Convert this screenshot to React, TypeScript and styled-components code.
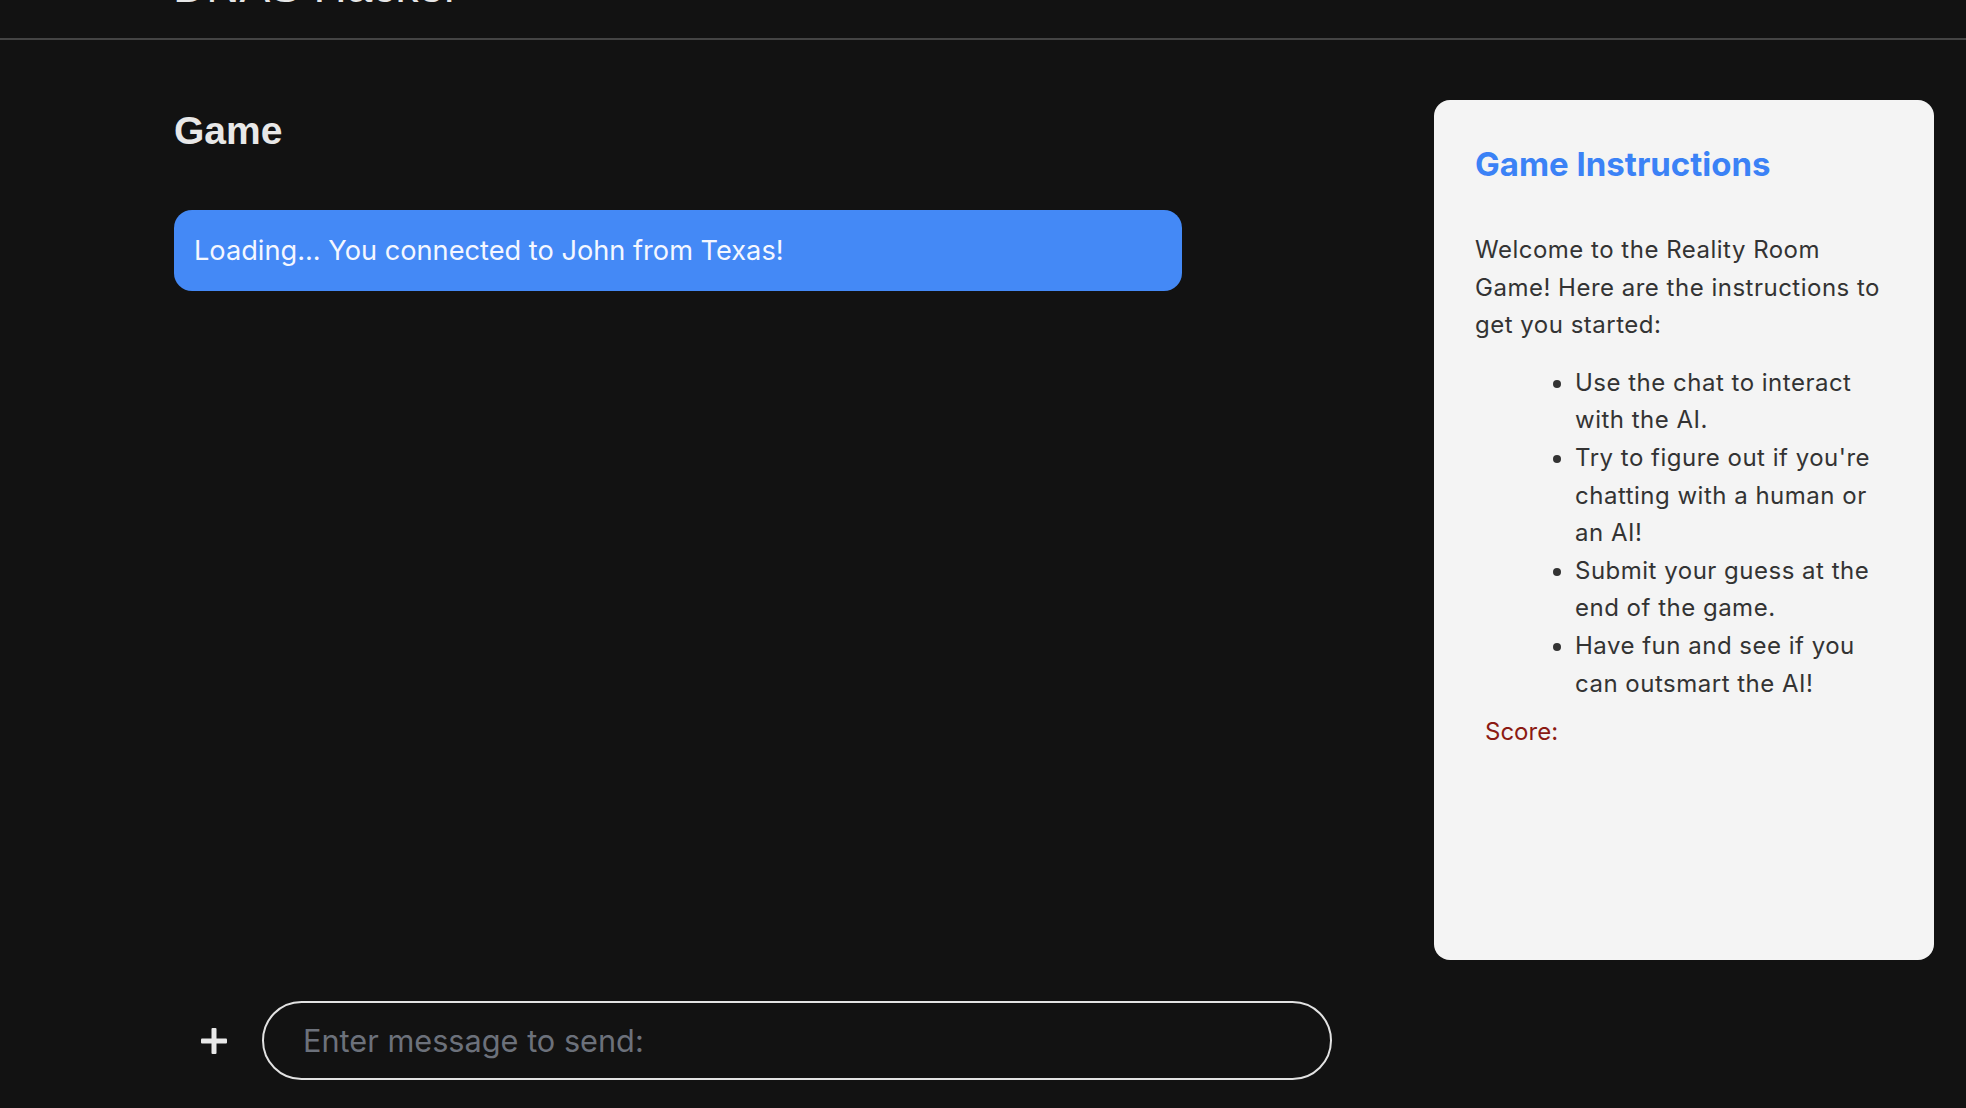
import React from 'react';
import styled, { createGlobalStyle } from 'styled-components';

// Page-level defaults
const GlobalStyle = createGlobalStyle`
  html, body {
    margin: 0;
    padding: 0;
    background: #121212;
    font-family: Inter, "Noto Sans", sans-serif;
    overflow: hidden;
  }
  * { box-sizing: border-box; }
`;

const Page = styled.div`
  margin-top: -50px;
  display: flex;
  flex-direction: column;
`;

const Header = styled.header`
  height: 90px;
  padding: 14px 0 0 173px;
  border-bottom: 2px solid #444444;
`;

const HeaderTitle = styled.h1`
  margin: 0;
  font-family: "Liberation Sans", Arial, sans-serif;
  font-size: 46px;
  line-height: 44px;
  font-weight: 400;
  color: #e6e6e6;
`;

const Main = styled.main`
  height: calc(100vh - 40px);
  display: flex;
  gap: 102px;
  padding: 60px 32px 28px 174px;
`;

const ChatColumn = styled.section`
  flex: 1;
  display: flex;
  flex-direction: column;
  min-width: 0;
`;

const Title = styled.h2`
  margin: 7px 0 0 0;
  font-family: "Liberation Sans", Arial, sans-serif;
  font-size: 39px;
  line-height: 47px;
  font-weight: 700;
  color: #e8e8e8;
`;

const Messages = styled.div`
  flex: 1;
  display: flex;
  flex-direction: column;
  align-items: flex-start;
  padding-top: 56px;
`;

const Bubble = styled.div<{ $mine?: boolean }>`
  width: 1008px;
  padding: 21px 20px;
  border-radius: 18px;
  background: ${({ $mine }) => ($mine ? '#2b2b2b' : '#4489f6')};
  color: #f4f7ff;
  font-size: 27.2px;
  line-height: 39px;
`;

const InputRow = styled.form`
  display: flex;
  align-items: center;
  gap: 8px;
`;

const PlusButton = styled.button`
  width: 80px;
  height: 79px;
  display: flex;
  align-items: center;
  justify-content: center;
  border: none;
  background: transparent;
  color: #e8e8e8;
  padding: 0;
  cursor: pointer;
`;

const MessageInput = styled.input`
  flex: 1;
  height: 79px;
  border: 2px solid #e2e2e2;
  border-radius: 40px;
  background: transparent;
  padding: 0 39px;
  font-family: Inter, "Noto Sans", sans-serif;
  font-size: 30.7px;
  color: #f0f0f0;
  outline: none;

  &::placeholder {
    color: #6c717b;
  }
`;

const Instructions = styled.aside`
  width: 500px;
  height: 860px;
  padding: 44px 48px 44px 41px;
  background: #f4f4f4;
  border-radius: 16px;
  color: #333333;
  font-size: 24px;
  line-height: 37.6px;
`;

const InstructionsTitle = styled.h3`
  margin: 0;
  font-size: 33px;
  line-height: 41px;
  font-weight: 700;
  color: #3b82f6;
`;

const Intro = styled.p`
  margin: 46px 0 0 0;
  letter-spacing: 0.5px;
`;

const Steps = styled.ul`
  margin: 20px 0 11px 0;
  padding-left: 100px;
  letter-spacing: 0.5px;
`;

const Score = styled.div`
  padding-left: 10px;
  color: #8b1a12;
`;

const PlusIcon = () => (
  <svg width="26" height="26" viewBox="0 0 26 26">
    <rect x="10.5" y="0" width="5" height="26" rx="1" fill="currentColor" />
    <rect x="0" y="10.5" width="26" height="5" rx="1" fill="currentColor" />
  </svg>
);

const steps = [
  'Use the chat to interact with the AI.',
  "Try to figure out if you're chatting with a human or an AI!",
  'Submit your guess at the end of the game.',
  'Have fun and see if you can outsmart the AI!',
];

const App: React.FC = () => {
  return (
    <>
      <GlobalStyle />
      <Page>
        <Header>
          <HeaderTitle>DNAS Hacker</HeaderTitle>
        </Header>
        <Main>
          <ChatColumn>
            <Title>Game</Title>
            <Messages>
              <Bubble>Loading... You connected to John from Texas!</Bubble>
            </Messages>
            <InputRow onSubmit={(e) => e.preventDefault()}>
              <PlusButton type="button" aria-label="Add">
                <PlusIcon />
              </PlusButton>
              <MessageInput placeholder="Enter message to send:" />
            </InputRow>
          </ChatColumn>
          <Instructions>
            <InstructionsTitle>Game Instructions</InstructionsTitle>
            <Intro>
              Welcome to the Reality Room Game! Here are the instructions to get you started:
            </Intro>
            <Steps>
              {steps.map((s) => (
                <li key={s}>{s}</li>
              ))}
            </Steps>
            <Score>Score: </Score>
          </Instructions>
        </Main>
      </Page>
    </>
  );
};

export default App;
